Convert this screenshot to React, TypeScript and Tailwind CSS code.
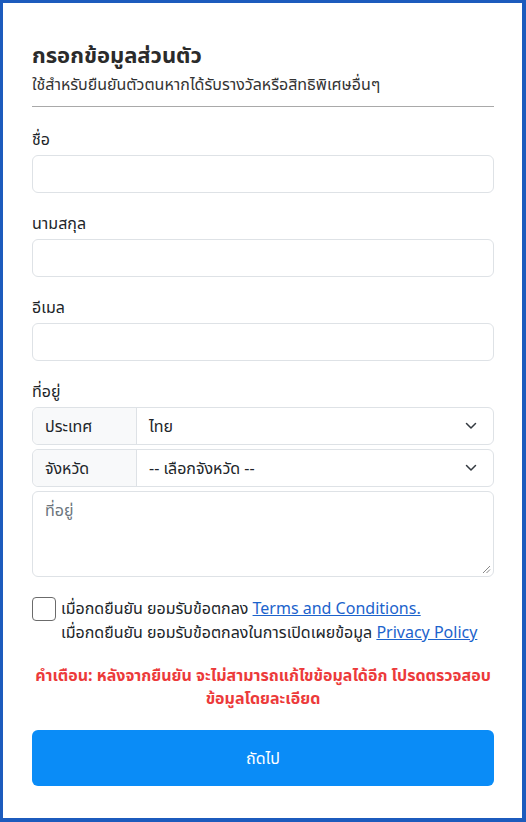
import React from "react";

const Chevron = () => (
  <svg width="12" height="8" viewBox="0 0 12 8" fill="none" stroke="#343a40" strokeWidth="1.5" strokeLinecap="round" strokeLinejoin="round">
    <path d="M1.5 1.5l4.5 4.5 4.5-4.5" />
  </svg>
);

export default function App() {
  return (
    <div
      className="w-[526px] h-[822px] border-[3px] border-r-4 border-b-4 border-[#1c5bbd] bg-white text-[#212529]"
      style={{ fontFamily: '"Noto Sans", "Noto Sans Thai", sans-serif' }}
    >
      <div className="pl-[29px] pr-[28px] pt-[36px]">
        <h1 className="text-[22px] font-bold leading-[30px] text-[#2b2b2b]">กรอกข้อมูลส่วนตัว</h1>
        <p className="text-[16px] leading-[24px] text-[#333] mt-[3px]">ใช้สำหรับยืนยันตัวตนหากได้รับรางวัลหรือสิทธิพิเศษอื่นๆ</p>
        <div className="h-px bg-[#a9a9a9] mt-[10px]" />

        <div className="mt-[21px] text-[16px] leading-[22px]">ชื่อ</div>
        <div className="mt-[5px] h-[38px] rounded-md border border-[#dee2e6]" />

        <div className="mt-[19px] text-[16px] leading-[22px]">นามสกุล</div>
        <div className="mt-[5px] h-[38px] rounded-md border border-[#dee2e6]" />

        <div className="mt-[19px] text-[16px] leading-[22px]">อีเมล</div>
        <div className="mt-[5px] h-[38px] rounded-md border border-[#dee2e6]" />

        <div className="mt-[19px] text-[16px] leading-[22px]">ที่อยู่</div>
        <div className="mt-[5px] h-[38px] rounded-md border border-[#dee2e6] flex text-[16px]">
          <div className="w-[104px] bg-[#f8f9fa] border-r border-[#dee2e6] rounded-l-md flex items-center pl-[12px]">ประเทศ</div>
          <div className="flex-1 flex items-center justify-between pl-[12px] pr-[16px]">
            <span>ไทย</span>
            <Chevron />
          </div>
        </div>
        <div className="mt-[4px] h-[38px] rounded-md border border-[#dee2e6] flex text-[16px]">
          <div className="w-[104px] bg-[#f8f9fa] border-r border-[#dee2e6] rounded-l-md flex items-center pl-[12px]">จังหวัด</div>
          <div className="flex-1 flex items-center justify-between pl-[12px] pr-[16px]">
            <span>-- เลือกจังหวัด --</span>
            <Chevron />
          </div>
        </div>
        <div className="mt-[4px] h-[86px] rounded-md border border-[#dee2e6] relative px-[12px] pt-[6px] text-[16px] text-[#6c757d]">
          ที่อยู่
          <svg className="absolute right-[2px] bottom-[2px]" width="9" height="9" viewBox="0 0 9 9" stroke="#888" strokeWidth="1">
            <path d="M1 8L8 1M4.5 8L8 4.5" />
          </svg>
        </div>

        <div className="mt-[19px] flex gap-[5px] text-[16px] leading-[24px]">
          <div className="w-[24px] h-[24px] rounded-[4px] border border-[#6b6b6b] shrink-0 mt-[1px]" />
          <div>
            <div>
              เมื่อกดยืนยัน ยอมรับข้อตกลง <span className="text-[#1c63cc] underline">Terms and Conditions.</span>
            </div>
            <div>
              เมื่อกดยืนยัน ยอมรับข้อตกลงในการเปิดเผยข้อมูล <span className="text-[#1c63cc] underline">Privacy Policy</span>
            </div>
          </div>
        </div>

        <div className="mt-[20px] text-center text-[16px] font-bold leading-[23px] text-[#ec3a3a]">
          คำเตือน: หลังจากยืนยัน จะไม่สามารถแก้ไขข้อมูลได้อีก โปรดตรวจสอบ
          <br />
          ข้อมูลโดยละเอียด
        </div>

        <div className="mt-[20px] h-[56px] rounded-md bg-[#0a8cf7] flex items-center justify-center text-white text-[16px]">
          ถัดไป
        </div>
      </div>
    </div>
  );
}
